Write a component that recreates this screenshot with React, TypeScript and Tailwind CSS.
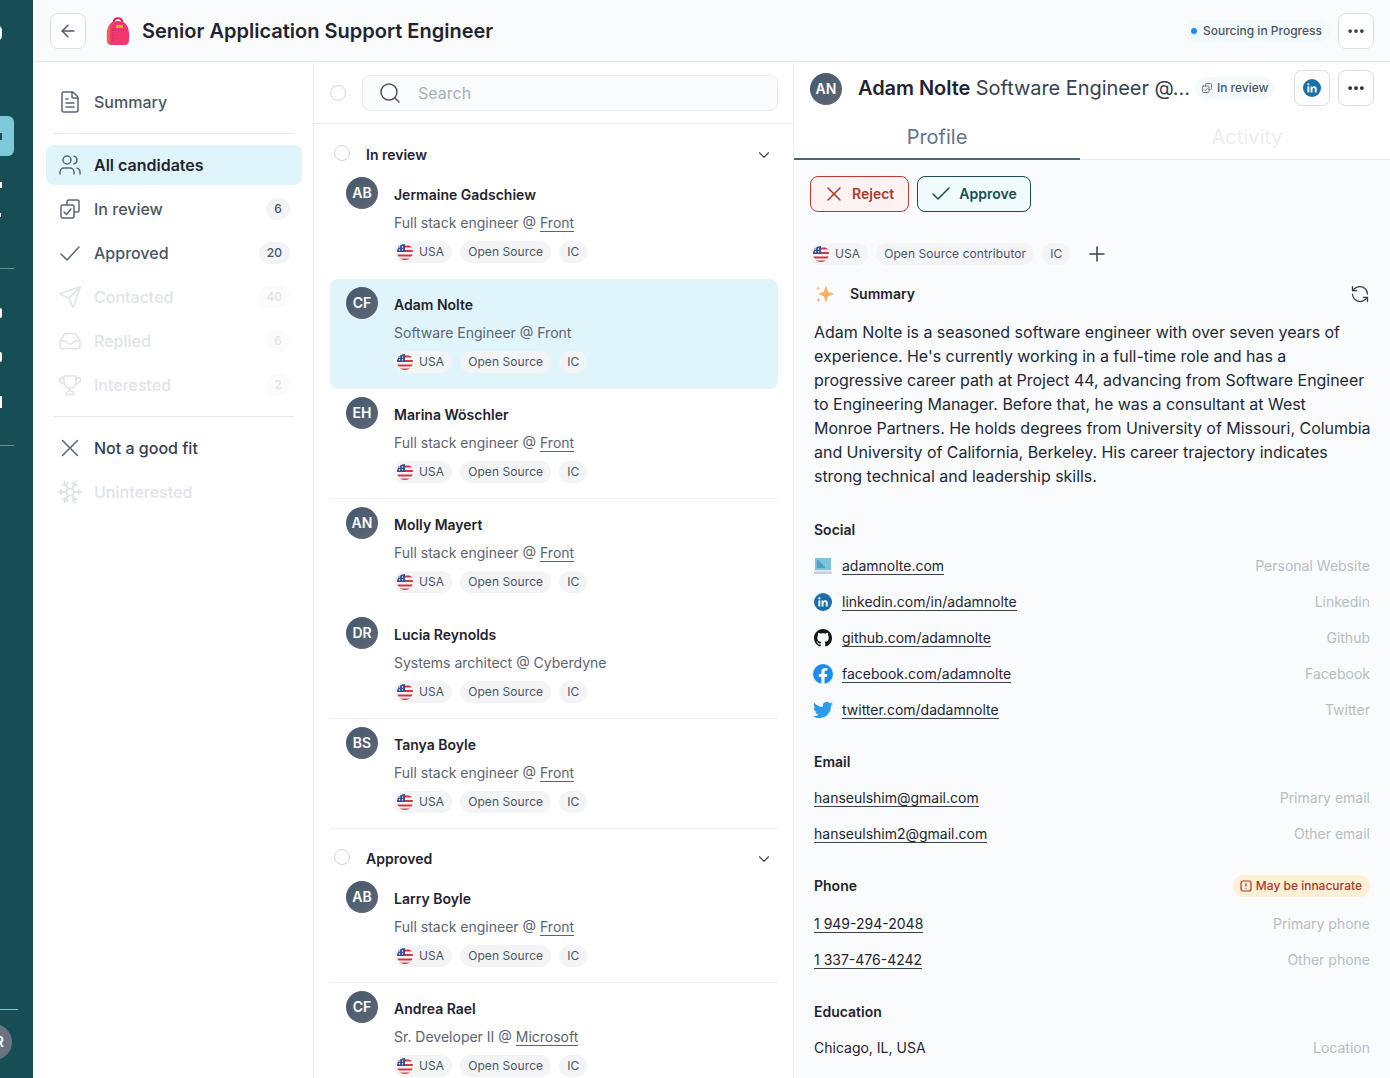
import React from "react";
import { ArrowLeft, Check, ChevronDown, FileText, MoreHorizontal, Plus, RefreshCcw, Search, Send, Snowflake, Users, X } from "lucide-react";

const Flag = ({ s = 16 }: { s?: number }) => (
  <svg width={s} height={s} viewBox="0 0 16 16" className="shrink-0">
    <defs><clipPath id="fc"><circle cx="8" cy="8" r="8" /></clipPath></defs>
    <g clipPath="url(#fc)">
      <rect width="16" height="16" fill="#f3f4f6" />
      <rect y="1.5" width="16" height="2" fill="#d8343f" />
      <rect y="6" width="16" height="2" fill="#d8343f" />
      <rect y="10.5" width="16" height="2" fill="#d8343f" />
      <rect y="14.5" width="16" height="2" fill="#d8343f" />
      <rect width="8" height="8" fill="#3b4f96" />
      <circle cx="2.5" cy="3" r=".7" fill="#fff" /><circle cx="5.5" cy="3" r=".7" fill="#fff" /><circle cx="2.5" cy="5.7" r=".7" fill="#fff" /><circle cx="5.5" cy="5.7" r=".7" fill="#fff" />
    </g>
  </svg>
);

const Backpack = () => (
  <svg width="24" height="30" viewBox="0 0 24 30" className="shrink-0">
    <path d="M7.5 7 C7.5 0.5 16.5 0.5 16.5 7" fill="none" stroke="#c9264f" strokeWidth="2" />
    <path d="M1 24 C0 12 3 5 12 5 C21 5 24 12 23 24 C23 28 21 29 18 29 L6 29 C3 29 1 28 1 24Z" fill="#f0376f" />
    <path d="M1 24 C0.6 15 2 10 5 7 C3.8 13 4 22 4.5 28.6 C2.4 28.2 1 26.8 1 24Z" fill="#e2694f" />
    <rect x="10" y="9" width="7" height="3" rx="1" fill="#e8a33d" />
    <path d="M7 14 H19" stroke="#b81f55" strokeWidth="1" strokeDasharray="1 1.5" />
    <path d="M7 14 V26" stroke="#b81f55" strokeWidth="1" strokeDasharray="1 1.5" />
  </svg>
);

const LinkedIn = ({ s = 18 }: { s?: number }) => (
  <svg width={s} height={s} viewBox="0 0 18 18" className="shrink-0">
    <circle cx="9" cy="9" r="9" fill="#1b6fa8" />
    <rect x="4.4" y="7.4" width="1.9" height="6" fill="#fff" />
    <circle cx="5.35" cy="5.3" r="1.1" fill="#fff" />
    <path d="M7.6 7.4h1.8v.9c.4-.6 1.1-1.05 2-1.05 1.7 0 2.3 1.1 2.3 2.8v3.35h-1.9v-3c0-.9-.3-1.5-1.05-1.5-.8 0-1.25.6-1.25 1.5v3H7.6z" fill="#fff" />
  </svg>
);

const Github = () => (
  <svg width="18" height="18" viewBox="0 0 16 16" className="shrink-0" fill="#14161a">
    <path d="M8 0C3.58 0 0 3.58 0 8c0 3.54 2.29 6.53 5.47 7.59.4.07.55-.17.55-.38 0-.19-.01-.82-.01-1.49-2.01.37-2.53-.49-2.69-.94-.09-.23-.48-.94-.82-1.13-.28-.15-.68-.52-.01-.53.63-.01 1.08.58 1.23.82.72 1.21 1.87.87 2.33.66.07-.52.28-.87.51-1.07-1.78-.2-3.64-.89-3.64-3.95 0-.87.31-1.59.82-2.15-.08-.2-.36-1.02.08-2.12 0 0 .67-.21 2.2.82.64-.18 1.32-.27 2-.27s1.36.09 2 .27c1.53-1.04 2.2-.82 2.2-.82.44 1.1.16 1.92.08 2.12.51.56.82 1.27.82 2.15 0 3.07-1.87 3.75-3.65 3.95.29.25.54.73.54 1.48 0 1.07-.01 1.93-.01 2.2 0 .21.15.46.55.38A8.01 8.01 0 0 0 16 8c0-4.42-3.58-8-8-8z" />
  </svg>
);

const Facebook = () => (
  <svg width="20" height="20" viewBox="0 0 20 20" className="shrink-0 -mx-px">
    <circle cx="10" cy="10" r="10" fill="#1d8cf0" />
    <path d="M13.9 12.9l.45-2.9h-2.8V8.1c0-.8.4-1.55 1.6-1.55h1.25V4.1s-1.15-.2-2.2-.2c-2.3 0-3.8 1.4-3.8 3.9V10H5.85v2.9H8.4v7h3.15v-7z" fill="#fff" />
  </svg>
);

const Twitter = () => (
  <svg width="20" height="20" viewBox="0 0 24 24" className="shrink-0 -mx-px" fill="#2a9bf0">
    <path d="M23.95 4.57a10 10 0 0 1-2.82.77 4.96 4.96 0 0 0 2.16-2.72 9.9 9.9 0 0 1-3.12 1.18 4.92 4.92 0 0 0-8.38 4.48C7.69 8.1 4.07 6.13 1.64 3.16a4.82 4.82 0 0 0-.66 2.47c0 1.71.87 3.21 2.19 4.1a4.9 4.9 0 0 1-2.23-.62v.06a4.92 4.92 0 0 0 3.95 4.83 5 5 0 0 1-2.21.08 4.94 4.94 0 0 0 4.6 3.42A9.87 9.87 0 0 1 0 19.54a14 14 0 0 0 7.56 2.21c9.05 0 14-7.5 14-13.98 0-.21 0-.42-.02-.63a9.94 9.94 0 0 0 2.41-2.57z" />
  </svg>
);

const Laptop = () => (
  <svg width="18" height="18" viewBox="0 0 18 18" className="shrink-0">
    <rect x="1" y="1" width="16" height="12" fill="#7cc4dc" />
    <path d="M3 3h2v2h2v2h2v2h2v2H3z" fill="#3f8fc0" opacity=".7" />
    <rect y="13" width="18" height="1.5" fill="#e3e6ea" />
    <rect y="14.5" width="18" height="2.5" rx="1" fill="#c9ced4" />
  </svg>
);

const Line = ({ d, className }: { d: string; className?: string }) => (
  <svg width="24" height="24" viewBox="0 0 24 24" fill="none" stroke="currentColor" strokeWidth="1.5" strokeLinejoin="round" strokeLinecap="round" className={className}>
    <path d={d} />
  </svg>
);

const SOFA = "M2 12 L6 5.5 C6.4 5 7 4.5 8 4.5 H16 C17 4.5 17.6 5 18 5.5 L22 12 V17.5 C22 18.6 21 19.5 20 19.5 H4 C3 19.5 2 18.6 2 17.5 Z M2 12 H7 C8 12 8.5 15 12 15 C15.5 15 16 12 17 12 H22";
const TROPHY = "M6 3 H18 V9 C18 12.5 15.5 15 12 15 C8.5 15 6 12.5 6 9 Z M6 5 H3 C2 5 1.5 5.5 1.5 6.5 C1.5 9 3.5 10.5 6.3 10.8 M18 5 H21 C22 5 22.5 5.5 22.5 6.5 C22.5 9 20.5 10.5 17.7 10.8 M12 15 V18 M8 21.5 C8 19.5 10 18 12 18 C14 18 16 19.5 16 21.5 Z";
const COPY = "M9 8 V4.5 C9 3.7 9.7 3 10.5 3 H19.5 C20.3 3 21 3.7 21 4.5 V13.5 C21 14.3 20.3 15 19.5 15 H16 M4.5 8 H14.5 C15.3 8 16 8.7 16 9.5 V19.5 C16 20.3 15.3 21 14.5 21 H4.5 C3.7 21 3 20.3 3 19.5 V9.5 C3 8.7 3.7 8 4.5 8 Z M6 15 L8.5 17.5 L13 12";
const CROSS = "M4.5 4.5 L19.5 19.5 M19.5 4.5 L4.5 19.5";
const TICK = "M3 13 L9 19 L21 6";

const NavItem = ({ icon, label, count, state = "normal" }: { icon: React.ReactNode; label: string; count?: string; state?: "normal" | "active" | "faded" | "dark" }) => {
  const text = state === "active" ? "bg-[#dff5fb] text-[#1f2430] font-semibold" : state === "faded" ? "text-[#dfe3e8] font-medium" : state === "dark" ? "text-[#374151] font-medium" : "text-[#4b5563] font-medium";
  return (
    <div className={`mb-1 flex h-10 items-center rounded-lg pl-[12px] pr-[12px] text-base ${text}`}>
      <span className={`flex w-6 justify-center ${state === "faded" ? "text-[#dfe3e8]" : "text-[#5b6675]"}`}>{icon}</span>
      <span className="ml-3 flex-1">{label}</span>
      {count && (
        <span className={`flex h-[22px] min-w-[24px] items-center justify-center rounded-full px-2 text-xs ${state === "faded" ? "bg-[#fbfbfc] text-[#dfe3e8]" : "bg-[#f3f4f6] text-[#4b5563]"}`}>{count}</span>
      )}
    </div>
  );
};

const Tag = ({ children, flag }: { children: React.ReactNode; flag?: boolean }) => (
  <span className={`flex h-[22px] items-center gap-[6px] rounded-full bg-[#f3f4f6] text-xs tracking-[0.08px] text-[#4b5563] ${flag ? "pl-[3px] pr-2" : "px-2"}`}>
    {flag && <Flag />}
    {children}
  </span>
);

const Row = ({ ini, name, role, company, link = true, selected, line }: { ini: string; name: string; role: string; company?: string; link?: boolean; selected?: boolean; line?: boolean }) => (
  <div className={`ml-4 mr-[15px] flex h-[110px] gap-4 rounded-lg pl-4 pt-[8px] ${selected ? "bg-[#dff5fb]" : ""} ${line ? "rounded-none border-b border-[#f0f1f3]" : ""}`}>
    <div className="flex h-8 w-8 shrink-0 items-center justify-center rounded-full bg-gradient-to-br from-[#44586f] to-[#5f6875] text-sm font-semibold text-white">{ini}</div>
    <div className="pt-[8px]">
      <div className="text-sm font-semibold leading-5 text-[#1f2430]">{name}</div>
      <div className="mt-2 text-sm leading-5 text-[#5b6472]">
        {role} @ {company && (link ? <span className="border-b border-[#5b6472]">{company}</span> : company)}
      </div>
      <div className="mt-2 flex gap-2">
        <Tag flag>USA</Tag>
        <Tag>Open Source</Tag>
        <Tag>IC</Tag>
      </div>
    </div>
  </div>
);

const GroupHead = ({ label }: { label: string }) => (
  <div className="flex h-7 items-center pl-5 pr-[20px]">
    <span className="mb-1 h-4 w-4 rounded-full border border-[#d1d5db] bg-white" />
    <span className="ml-4 flex-1 text-sm font-semibold text-[#1f2430]">{label}</span>
    <ChevronDown size={18} strokeWidth={1.5} className="text-[#374151]" />
  </div>
);

const Info = ({ icon, text, label, link = true }: { icon?: React.ReactNode; text: string; label: string; link?: boolean }) => (
  <div className="flex h-9 items-center text-sm">
    {icon && <span className="mr-[10px] flex w-[18px] justify-center">{icon}</span>}
    <span className="flex-1 text-[#1f2430]">
      <span className={link ? "border-b border-[#374151]" : ""}>{text}</span>
    </span>
    <span className="text-[#b8bdc5]">{label}</span>
  </div>
);

export default function App() {
  return (
    <div className="flex h-screen w-full overflow-hidden bg-white font-['Inter',sans-serif]">
      <aside className="flex w-[33px] shrink-0 flex-col overflow-hidden bg-[#174d54]">
        <div className="mt-[25px] ml-[-9px] h-[16px] w-[11px] rounded-full border-[2px] border-white" />
        <div className="mt-[75px] flex h-10 w-[14px] items-center rounded-r-md bg-[#7dc9da]"><span className="h-[7px] w-[2px] bg-[#174d54]" /></div>
        <div className="mt-[26px] h-[6px] w-[2px] bg-white" />
        <div className="mt-[25px] h-[4px] w-[1px] bg-white" />
        <div className="mt-[51px] h-px w-[14px] bg-[#6f9297]" />
        <div className="mt-[39px] h-[10px] w-[2px] rounded-r bg-white" />
        <div className="mt-[34px] h-[10px] w-[2px] rounded-r bg-white" />
        <div className="mt-[34px] h-[12px] w-[2px] bg-white" />
        <div className="mt-[37px] h-px w-[14px] bg-[#6f9297]" />
        <div className="mt-auto h-px w-[18px] bg-[#7dc9da]" />
        <div className="mb-[18px] ml-[-24px] mt-[14px] flex h-9 w-9 items-center justify-end rounded-full bg-[#6b7280] pr-[8px] text-sm font-semibold text-white">R</div>
      </aside>

      <div className="flex min-w-0 flex-1 flex-col">
        <header className="flex h-[62px] shrink-0 items-center border-b border-[#e8ebee] bg-[#f9fbfc] pl-[17px] pr-4">
          <button className="flex h-9 w-9 items-center justify-center rounded-lg border border-[#dcdfe5] bg-white text-[#4b5563]">
            <ArrowLeft size={20} strokeWidth={1.75} />
          </button>
          <span className="ml-[20px]"><Backpack /></span>
          <h1 className="ml-[12px] flex-1 text-xl font-semibold text-[#1f2430]">Senior Application Support Engineer</h1>
          <span className="flex h-[22px] items-center gap-[6px] rounded-full bg-[#f2fafd] pl-[6px] pr-2 text-xs font-medium text-[#4b5563]">
            <span className="h-[6px] w-[6px] rounded-full bg-[#1d8cf0]" />Sourcing in Progress
          </span>
          <button className="ml-2 flex h-9 w-9 items-center justify-center rounded-lg border border-[#dcdfe5] bg-white text-[#374151]">
            <MoreHorizontal size={20} strokeWidth={2.5} />
          </button>
        </header>

        <div className="flex min-h-0 flex-1">
          <nav className="w-[281px] shrink-0 border-r border-[#eceef1] pl-[13px] pr-[11px]">
            <div className="mt-5"><NavItem icon={<FileText size={24} strokeWidth={1.5} />} label="Summary" /></div>
            <div className="mx-2 mb-[11px] mt-[11px] h-px bg-[#e8ebee]" />
            <NavItem icon={<Users size={24} strokeWidth={1.5} />} label="All candidates" state="active" />
            <NavItem icon={<Line d={COPY} />} label="In review" count="6" />
            <NavItem icon={<Line d={TICK} />} label="Approved" count="20" />
            <NavItem icon={<Send size={24} strokeWidth={1.5} />} label="Contacted" count="40" state="faded" />
            <NavItem icon={<Line d={SOFA} />} label="Replied" count="6" state="faded" />
            <NavItem icon={<Line d={TROPHY} />} label="Interested" count="2" state="faded" />
            <div className="mx-2 mb-[11px] mt-[11px] h-px bg-[#e8ebee]" />
            <NavItem icon={<Line d={CROSS} />} label="Not a good fit" state="dark" />
            <NavItem icon={<Snowflake size={28} strokeWidth={1.5} className="-m-[2px]" />} label="Uninterested" state="faded" />
          </nav>

          <section className="flex w-[480px] shrink-0 flex-col overflow-hidden border-r border-[#eceef1]">
            <div className="flex h-[62px] shrink-0 items-center border-b border-[#e8ebee] pl-4 pr-[15px]">
              <span className="h-4 w-4 rounded-full border border-[#d1d5db]" />
              <div className="ml-4 flex h-9 flex-1 items-center rounded-lg border border-[#e8ebee] bg-[#f9fbfc] pl-[15px] text-base text-[#a8afb9]">
                <Search size={24} strokeWidth={1.5} className="text-[#4b5563]" />
                <span className="ml-[16px]">Search</span>
              </div>
            </div>
            <div className="pt-[17px]">
              <GroupHead label="In review" />
              <Row ini="AB" name="Jermaine Gadschiew" role="Full stack engineer" company="Front" />
              <Row ini="CF" name="Adam Nolte" role="Software Engineer" company="Front" link={false} selected />
              <Row ini="EH" name="Marina Wöschler" role="Full stack engineer" company="Front" line />
              <Row ini="AN" name="Molly Mayert" role="Full stack engineer" company="Front" />
              <Row ini="DR" name="Lucia Reynolds" role="Systems architect" company="Cyberdyne" link={false} line />
              <Row ini="BS" name="Tanya Boyle" role="Full stack engineer" company="Front" line />
              <div className="pt-[16px]"><GroupHead label="Approved" /></div>
              <div className="h-[110px]"><Row ini="AB" name="Larry Boyle" role="Full stack engineer" company="Front" line /></div>
              <Row ini="CF" name="Andrea Rael" role="Sr. Developer II" company="Microsoft" />
            </div>
          </section>

          <section className="min-w-0 flex-1 overflow-hidden bg-[#f9fbfc]">
            <div className="bg-white">
              <div className="flex h-[52px] items-center pl-4 pr-4">
                <div className="mt-px flex h-8 w-8 items-center justify-center rounded-full bg-gradient-to-br from-[#44586f] to-[#5f6875] text-sm font-semibold text-white">AN</div>
                <div className="ml-4 whitespace-nowrap text-xl tracking-[-0.06px] text-[#374151]"><span className="font-semibold text-[#1f2430]">Adam Nolte</span> Software Engineer @...</div>
                <span className="ml-[6px] flex h-[22px] items-center gap-1 rounded-full bg-[#f2fafd] px-[5px] text-xs font-medium text-[#4b5563]"><Line d={COPY} className="h-3 w-3" />In review</span>
                <span className="flex-1" />
                <button className="flex h-9 w-9 items-center justify-center rounded-lg border border-[#dcdfe5] bg-white"><LinkedIn /></button>
                <button className="ml-2 flex h-9 w-9 items-center justify-center rounded-lg border border-[#dcdfe5] bg-white text-[#1f2430]"><MoreHorizontal size={20} strokeWidth={2.5} /></button>
              </div>
              <div className="flex h-[46px] gap-6 border-b border-[#e8ebee] text-xl">
                <div className="-mb-px flex w-[286px] items-center justify-center border-b-2 border-[#4a6478] pt-[2px] text-[#64748b]">Profile</div>
                <div className="flex w-[286px] items-center justify-center text-[#eceef1]">Activity</div>
              </div>
            </div>
            <div className="px-5 pt-4">
              <div className="-ml-1 flex gap-2">
                <button className="flex h-9 items-center gap-[6px] rounded-lg border border-[#b93a2b] bg-[#fef3f2] pl-[11px] pr-[14px] text-sm font-semibold text-[#a8392b]"><X size={24} strokeWidth={1.5} />Reject</button>
                <button className="flex h-9 items-center gap-[6px] rounded-lg border border-[#174d54] bg-[#f0fbfd] pl-[11px] pr-[13px] text-sm font-semibold text-[#174d54]"><Check size={24} strokeWidth={1.5} />Approve</button>
              </div>
              <div className="-ml-[4px] mt-[30px] flex items-center gap-2">
                <Tag flag>USA</Tag>
                <Tag>Open Source contributor</Tag>
                <Tag>IC</Tag>
                <Plus size={24} strokeWidth={1.5} className="ml-[7px] text-[#374151]" />
              </div>
              <div className="mt-[17px] flex h-[22px] items-center">
                <svg width="20" height="20" viewBox="0 0 20 20" className="shrink-0">
                  <path d="M12 1.5 L14.2 7.8 L20 10 L14.2 12.2 L12 18.5 L9.8 12.2 L4 10 L9.8 7.8Z" fill="#f7b267" />
                  <path d="M4 2 C4.3 3.8 4.8 4.2 6.5 4.5 C4.8 4.8 4.3 5.2 4 7 C3.7 5.2 3.2 4.8 1.5 4.5 C3.2 4.2 3.7 3.8 4 2Z" fill="#f9c9a0" />
                  <path d="M4.5 13.5 C4.8 15.2 5.2 15.6 7 16 C5.2 16.4 4.8 16.8 4.5 18.5 C4.2 16.8 3.8 16.4 2 16 C3.8 15.6 4.2 15.2 4.5 13.5Z" fill="#f4a582" />
                </svg>
                <span className="ml-4 flex-1 text-sm font-semibold text-[#1f2430]">Summary</span>
                <RefreshCcw size={20} strokeWidth={1.5} className="text-[#374151]" />
              </div>
              <p className="mt-[15px] whitespace-nowrap text-base leading-6 tracking-[-0.03px] text-[#1f2937]">
                Adam Nolte is a seasoned software engineer with over seven years of<br />
                experience. He's currently working in a full-time role and has a<br />
                progressive career path at Project 44, advancing from Software Engineer<br />
                to Engineering Manager. Before that, he was a consultant at West<br />
                Monroe Partners. He holds degrees from University of Missouri, Columbia<br />
                and University of California, Berkeley. His career trajectory indicates<br />
                strong technical and leadership skills.
              </p>
              <h3 className="mt-[32px] text-sm font-semibold leading-5 text-[#1f2430]">Social</h3>
              <div className="mt-[8px]">
                <Info icon={<Laptop />} text="adamnolte.com" label="Personal Website" />
                <Info icon={<LinkedIn />} text="linkedin.com/in/adamnolte" label="Linkedin" />
                <Info icon={<Github />} text="github.com/adamnolte" label="Github" />
                <Info icon={<Facebook />} text="facebook.com/adamnolte" label="Facebook" />
                <Info icon={<Twitter />} text="twitter.com/dadamnolte" label="Twitter" />
              </div>
              <h3 className="mt-[24px] text-sm font-semibold leading-5 text-[#1f2430]">Email</h3>
              <div className="mt-[8px]">
                <Info text="hanseulshim@gmail.com" label="Primary email" />
                <Info text="hanseulshim2@gmail.com" label="Other email" />
              </div>
              <div className="mt-[24px] flex h-5 items-center justify-between">
                <h3 className="text-sm font-semibold text-[#1f2430]">Phone</h3>
                <span className="flex h-[22px] items-center gap-1 rounded-full bg-[#fdf0d5] pl-[7px] pr-2 text-xs font-medium text-[#a8392b]">
                  <svg width="12" height="12" viewBox="0 0 12 12" fill="none" stroke="currentColor" strokeWidth="1.2"><rect x="1" y="1" width="10" height="10" rx="2" /><path d="M6 3.2v3.2M6 8v.8" /></svg>
                  May be innacurate
                </span>
              </div>
              <div className="mt-[10px]">
                <Info text="1 949-294-2048" label="Primary phone" />
                <Info text="1 337-476-4242" label="Other phone" />
              </div>
              <h3 className="mt-[24px] text-sm font-semibold leading-5 text-[#1f2430]">Education</h3>
              <div className="mt-[8px]">
                <Info text="Chicago, IL, USA" label="Location" link={false} />
              </div>
            </div>
          </section>
        </div>
      </div>
    </div>
  );
}
